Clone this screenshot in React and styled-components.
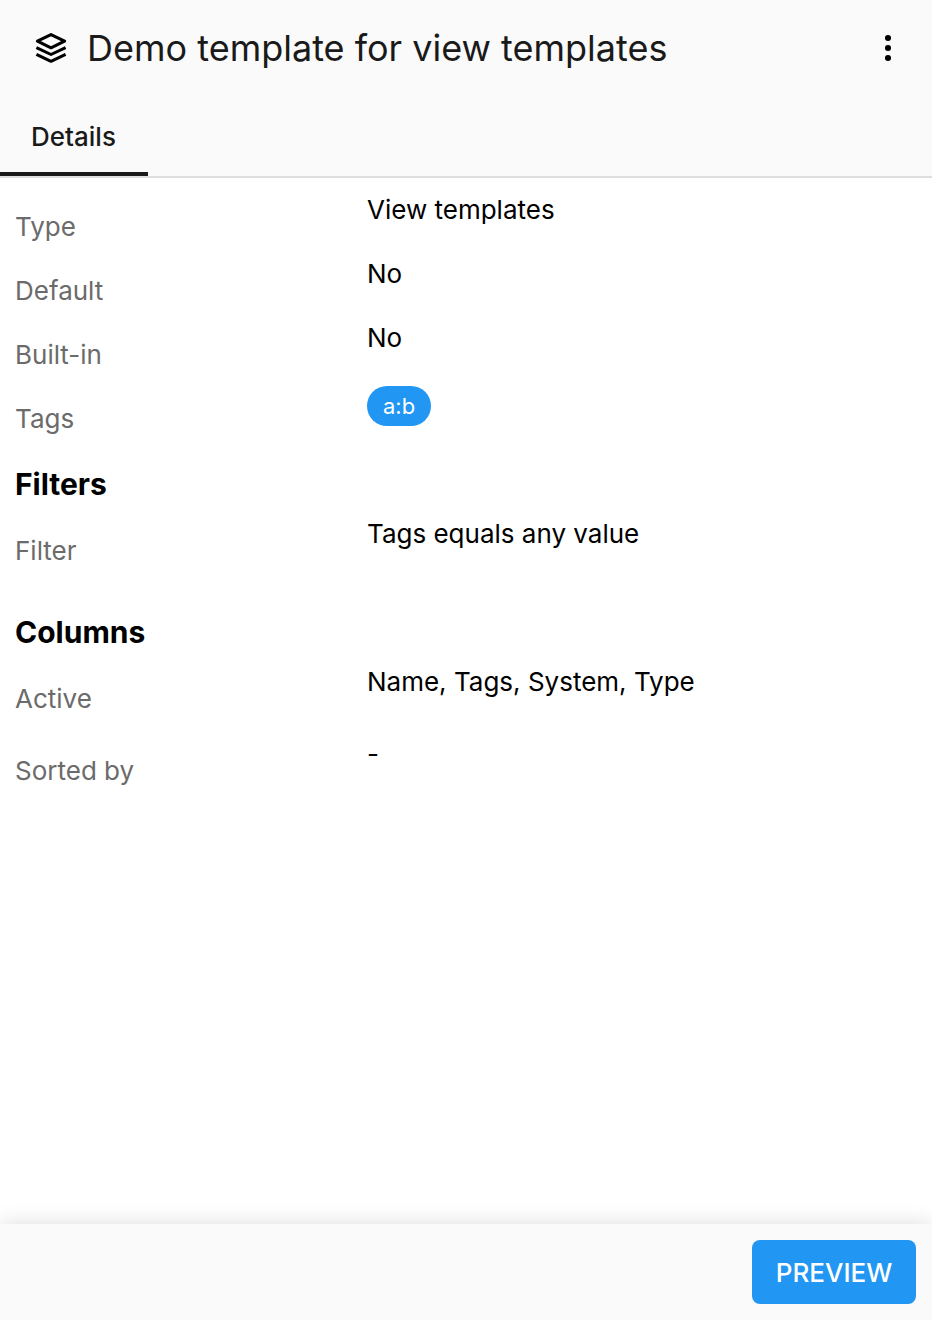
import React from "react";
import styled, { createGlobalStyle } from "styled-components";

const Global = createGlobalStyle`
  * { box-sizing: border-box; }
  body { margin: 0; background: #fff; font-family: Inter, "Liberation Sans", sans-serif; -webkit-font-smoothing: antialiased; }
`;

const Page = styled.div`
  display: flex;
  flex-direction: column;
  height: 1320px;
  color: #000;
`;

const Header = styled.header`
  background: #fafafa;
  border-bottom: 2px solid #dedede;
  height: 178px;
  display: flex;
  flex-direction: column;
  justify-content: space-between;
`;

const TitleBar = styled.div`
  display: flex;
  align-items: center;
  height: 96px;
  padding: 0 28px 0 35px;
`;

const Title = styled.h1`
  margin: 0 auto 0 20px;
  font-size: 36px;
  font-weight: 400;
  line-height: 48px;
  color: #1a1a1a;
  white-space: nowrap;
`;

const MenuButton = styled.button`
  border: 0;
  padding: 0;
  background: none;
  display: flex;
  width: 32px;
  height: 32px;
`;

const Tab = styled.div`
  width: 148px;
  height: 80px;
  padding-left: 31px;
  border-bottom: 4px solid #1a1a1a;
  font-size: 26px;
  font-weight: 500;
  line-height: 82px;
  color: #1a1a1a;
`;

const Content = styled.main`
  flex: 1;
  padding: 0 15px;
`;

const Row = styled.div`
  display: flex;
  height: ${(p) => p.$height || 64}px;
`;

const Label = styled.div`
  width: 352px;
  padding-top: 33px;
  font-size: 26px;
  line-height: 32px;
  color: #6b6b6b;
`;

const Value = styled.div`
  padding-top: 16px;
  font-size: 26px;
  line-height: 32px;
`;

const Chip = styled.span`
  display: block;
  height: 40px;
  padding: 0 16px;
  border-radius: 20px;
  background: #2196f3;
  color: #fff;
  font-size: 22px;
  line-height: 40px;
`;

const SectionTitle = styled.h2`
  margin: 0;
  padding-top: 32px;
  height: 68px;
  font-size: 30px;
  font-weight: 700;
  line-height: 36px;
`;

const Footer = styled.footer`
  height: 96px;
  padding: 16px;
  display: flex;
  justify-content: flex-end;
  background: #fafafa;
  box-shadow: 0 0 20px rgba(0, 0, 0, 0.14);
`;

const PreviewButton = styled.button`
  width: 164px;
  height: 64px;
  padding: 0;
  border: 0;
  border-radius: 8px;
  background: #2196f3;
  color: #fff;
  font: 500 26px Inter, "Liberation Sans", sans-serif;
`;

const Field = ({ label, height, children }) => (
  <Row $height={height}>
    <Label>{label}</Label>
    <Value>{children}</Value>
  </Row>
);

export default function App() {
  return (
    <Page>
      <Global />
      <Header>
        <TitleBar>
          <svg width="32" height="32" viewBox="0 0 32 32" fill="none" stroke="#000" strokeWidth="3" strokeLinejoin="round">
            <path d="M16 2.6 29.6 9.2 16 15.8 2.4 9.2Z" />
            <path d="M1.4 15.6 16 22.5 30.6 15.6" />
            <path d="M1.4 22.3 16 29.3 30.6 22.3" />
          </svg>
          <Title>Demo template for view templates</Title>
          <MenuButton aria-label="More actions">
            <svg width="32" height="32" viewBox="0 0 32 32">
              <circle cx="16" cy="6" r="3.05" />
              <circle cx="16" cy="16" r="3.05" />
              <circle cx="16" cy="26" r="3.05" />
            </svg>
          </MenuButton>
        </TitleBar>
        <Tab>Details</Tab>
      </Header>
      <Content>
        <Field label="Type">View templates</Field>
        <Field label="Default">No</Field>
        <Field label="Built-in">No</Field>
        <Field label="Tags"><Chip>a:b</Chip></Field>
        <SectionTitle>Filters</SectionTitle>
        <Field label="Filter" height={80}>Tags equals any value</Field>
        <SectionTitle>Columns</SectionTitle>
        <Field label="Active" height={72}>Name, Tags, System, Type</Field>
        <Field label="Sorted by">-</Field>
      </Content>
      <Footer>
        <PreviewButton>PREVIEW</PreviewButton>
      </Footer>
    </Page>
  );
}
